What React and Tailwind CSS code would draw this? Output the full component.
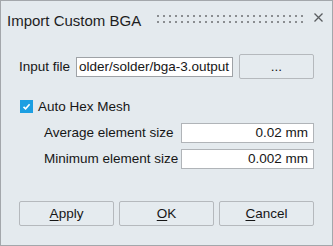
import React from "react";

function Grip() {
  const dots = [];
  for (let r = 0; r < 2; r++) {
    for (let c = 0; c < 25; c++) {
      dots.push(<rect key={r + "-" + c} x={c * 6} y={r * 6} width="2" height="2" fill="#8a8d90" />);
    }
  }
  return (
    <svg width="146" height="8" viewBox="0 0 146 8" className="block mr-[11px] mb-[2px]">
      {dots}
    </svg>
  );
}

export default function App() {
  return (
    <div className="w-[333px] h-[246px] border border-[#a3a7ab] bg-[#e4eaee] flex flex-col font-['Liberation_Sans',Arial,sans-serif] text-[13.5px] text-[#161616] leading-none overflow-hidden">
      {/* Title bar */}
      <div className="h-[38px] flex items-center pl-[6px] pr-[9px] shrink-0">
        <span className="text-[15px] text-[#1e1e1e] whitespace-nowrap mt-[1px]">Import Custom BGA</span>
        <div className="ml-auto flex items-center">
          <Grip />
          <svg width="9" height="9" viewBox="0 0 9 9" className="block mb-[5px]">
            <path d="M0.5 0.5 L8.5 8.5 M8.5 0.5 L0.5 8.5" stroke="#5a5d60" strokeWidth="1.3" fill="none" />
          </svg>
        </div>
      </div>

      {/* Input file row */}
      <div className="mt-[15px] flex items-center pl-[18px] shrink-0">
        <span className="w-[57px] whitespace-nowrap">Input file</span>
        <div className="w-[157px] h-[20px] bg-white border border-[#9ea2a6] flex items-center pl-[2px] overflow-hidden whitespace-nowrap">
          older/solder/bga-3.output
        </div>
        <button className="ml-[6px] w-[75px] h-[25px] border border-[#b5b9bd] rounded-[2px] bg-[#e5ebef] flex items-center justify-center text-[13.5px]">
          ...
        </button>
      </div>

      {/* Checkbox row */}
      <div className="mt-[21px] flex items-center pl-[19px] h-[13px] shrink-0">
        <div className="w-[13px] h-[13px] bg-[#1c9fe2] flex items-center justify-center">
          <svg width="9" height="9" viewBox="0 0 9 9" className="block">
            <path d="M1.5 4.8 L3.6 6.8 L7.6 2.2" stroke="white" strokeWidth="1.6" fill="none" />
          </svg>
        </div>
        <span className="ml-[5px] whitespace-nowrap">Auto Hex Mesh</span>
      </div>

      {/* Average */}
      <div className="mt-[10px] flex items-center pl-[43px] shrink-0">
        <span className="w-[137px] whitespace-nowrap">Average element size</span>
        <div className="w-[133px] h-[20px] bg-white border border-[#b0b4b8] flex items-center justify-end pr-[5px] whitespace-nowrap">
          0.02 mm
        </div>
      </div>

      {/* Minimum */}
      <div className="mt-[6px] flex items-center pl-[43px] shrink-0">
        <span className="w-[137px] whitespace-nowrap">Minimum element size</span>
        <div className="w-[133px] h-[20px] bg-white border border-[#b0b4b8] flex items-center justify-end pr-[5px] whitespace-nowrap">
          0.002 mm
        </div>
      </div>

      {/* Buttons */}
      <div className="mt-[32px] flex pl-[18px] gap-[5px] shrink-0">
        <button className="w-[95px] h-[25px] border border-[#b5b9bd] rounded-[2px] bg-[#e5ebef] flex items-center justify-center text-[13.5px]">
          <span><u className="underline-offset-2">A</u>pply</span>
        </button>
        <button className="w-[95px] h-[25px] border border-[#b5b9bd] rounded-[2px] bg-[#e5ebef] flex items-center justify-center text-[13.5px]">
          <span><u className="underline-offset-2">O</u>K</span>
        </button>
        <button className="w-[95px] h-[25px] border border-[#b5b9bd] rounded-[2px] bg-[#e5ebef] flex items-center justify-center text-[13.5px]">
          <span><u className="underline-offset-2">C</u>ancel</span>
        </button>
      </div>
    </div>
  );
}
